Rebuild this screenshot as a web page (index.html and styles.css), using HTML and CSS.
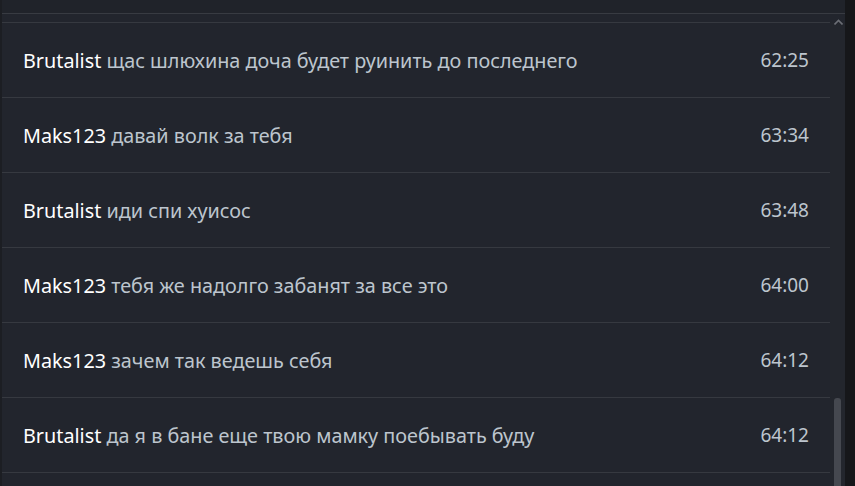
FILE: index.html
```html
<!DOCTYPE html>
<html lang="ru">
<head>
<meta charset="utf-8">
<link rel="stylesheet" href="styles.css">
</head>
<body>
<div class="panel">
  <div class="top"></div>
  <div class="content">
    <div class="list">
      <div class="row"><span class="msg"><span class="name">Brutalist</span> щас шлюхина доча будет руинить до последнего</span><span class="time">62:25</span></div>
      <div class="row"><span class="msg"><span class="name">Maks123</span> давай волк за тебя</span><span class="time">63:34</span></div>
      <div class="row"><span class="msg"><span class="name">Brutalist</span> иди спи хуисос</span><span class="time">63:48</span></div>
      <div class="row"><span class="msg"><span class="name">Maks123</span> тебя же надолго забанят за все это</span><span class="time">64:00</span></div>
      <div class="row"><span class="msg"><span class="name">Maks123</span> зачем так ведешь себя</span><span class="time">64:12</span></div>
      <div class="row"><span class="msg"><span class="name">Brutalist</span> да я в бане еще твою мамку поебывать буду</span><span class="time">64:12</span></div>
      <div class="row"></div>
    </div>
    <div class="scroll">
      <svg class="arrow" width="9" height="6" viewBox="0 0 9 6"><path d="M0.5 5.5 L4.5 1.5 L8.5 5.5" fill="none" stroke="#6b6e75" stroke-width="1.6"/></svg>
      <div class="thumb"></div>
    </div>
  </div>
</div>
<div class="edge"></div>
</body>
</html>
```

FILE: styles.css
```css
html, body {
  margin: 0;
  padding: 0;
  height: 100%;
  overflow: hidden;
}
body {
  display: flex;
  background: #22252d;
  font-family: "Noto Sans", "Open Sans", sans-serif;
}
.panel {
  flex: 1;
  display: flex;
  flex-direction: column;
  min-width: 0;
  border-left: 2px solid #1c1e23;
}
.top {
  height: 13px;
  flex: none;
  background: #20232a;
  border-bottom: 1px solid #383b42;
}
.content {
  flex: 1;
  display: flex;
  padding-top: 8px;
  min-height: 0;
}
.list {
  flex: 1;
  min-width: 0;
  overflow: hidden;
}
.row {
  height: 74px;
  border-top: 1px solid #363940;
  display: flex;
  align-items: center;
  justify-content: space-between;
  padding: 0 21px 0 21px;
  font-size: 19.8px;
  color: #bdc5ce;
}
.name {
  color: #ffffff;
}
.time {
  color: #bdc5ce;
  font-size: 19px;
}
.scroll {
  width: 15px;
  flex: none;
  background: #23262d;
  position: relative;
}
.arrow {
  position: absolute;
  left: 4px;
  top: -3px;
}
.thumb {
  position: absolute;
  left: 4px;
  width: 7px;
  top: 376px;
  bottom: 0;
  background: #45484f;
  border-radius: 3px 3px 0 0;
}
.edge {
  width: 10px;
  flex: none;
  background: #16171a;
}
```
